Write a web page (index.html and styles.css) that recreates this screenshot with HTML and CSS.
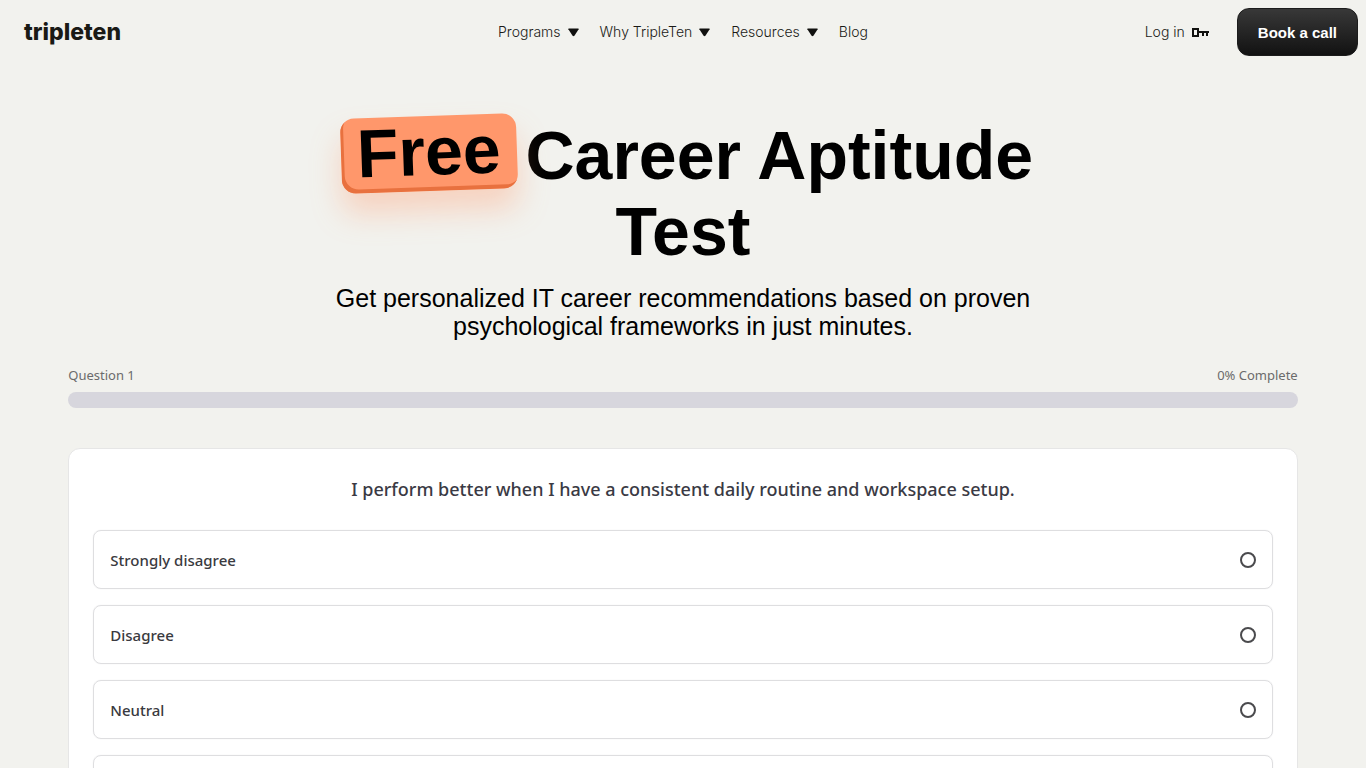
FILE: index.html
```html
<!DOCTYPE html>
<html lang="en">

<head>
    <title>Free Career Aptitude Test | TripleTen</title>
    <meta charset="UTF-8">
    <meta name="viewport" content="width=device-width, initial-scale=1.0">
    <link rel="stylesheet" href="styles.css">
</head>

<body>
    <header class="header">
        <a class="logo" href="#">tripleten</a>
        <nav class="nav">
            <button class="nav-item" type="button">Programs
                <svg class="arrow" viewBox="0 0 12 9"><path d="M1 0h10q1 0 .6 1L7 8q-1 1-2 0L.4 1Q0 0 1 0z"/></svg>
            </button>
            <button class="nav-item" type="button">Why TripleTen
                <svg class="arrow" viewBox="0 0 12 9"><path d="M1 0h10q1 0 .6 1L7 8q-1 1-2 0L.4 1Q0 0 1 0z"/></svg>
            </button>
            <button class="nav-item" type="button">Resources
                <svg class="arrow" viewBox="0 0 12 9"><path d="M1 0h10q1 0 .6 1L7 8q-1 1-2 0L.4 1Q0 0 1 0z"/></svg>
            </button>
            <a class="nav-item" href="#">Blog</a>
        </nav>
        <div class="actions">
            <a class="login" href="#">Log in
                <svg class="key" viewBox="0 0 17 9"><path fill-rule="evenodd" d="M0 0h7v3h10v2h-1v3h-2V5h-2v3h-2V5H7v4H0zM2 2v5h3V2z"/></svg>
            </a>
            <button class="btn-call" type="button">Book a call</button>
        </div>
    </header>

    <main>
        <section class="hero">
            <h1><span class="free">Free</span> Career Aptitude Test</h1>
            <p>Get personalized IT career recommendations based on proven psychological frameworks in just minutes.</p>
        </section>

        <section class="quiz">
            <div class="progress-info">
                <span id="question-number">Question 1</span>
                <span>0% Complete</span>
            </div>
            <progress class="progress" max="100" value="0" aria-labelledby="question-number"></progress>

            <form class="card">
                <h2 id="question">I perform better when I have a consistent daily routine and workspace setup.</h2>
                <div class="options" role="radiogroup" aria-labelledby="question">
                    <label class="option">Strongly disagree<input type="radio" name="answer" value="1"></label>
                    <label class="option">Disagree<input type="radio" name="answer" value="2"></label>
                    <label class="option">Neutral<input type="radio" name="answer" value="3"></label>
                    <label class="option">Agree<input type="radio" name="answer" value="4"></label>
                    <label class="option">Strongly agree<input type="radio" name="answer" value="5"></label>
                </div>
            </form>
        </section>
    </main>
</body>

</html>
```
FILE: styles.css
```css
* {
    box-sizing: border-box;
}
body {
    margin: 0;
    background-color: #f2f2ee;
    color: #000;
    font-family: "Liberation Sans", Arial, sans-serif;
}
a {
    color: inherit;
    text-decoration: none;
}
button {
    font-family: inherit;
    cursor: pointer;
}

/* header */
.header {
    display: grid;
    grid-template-columns: 1fr auto 1fr;
    align-items: center;
    padding: 8px;
}
.logo {
    margin-left: 16px;
    color: #1a1a16;
    font-family: Inter, sans-serif;
    font-size: 23px;
    font-weight: 800;
    line-height: 28px;
}
.nav {
    display: flex;
    gap: 21px;
}
.nav-item,
.login {
    display: flex;
    align-items: center;
    gap: 7px;
    padding: 0;
    border: none;
    background: none;
    color: #1a1a16;
    font-family: Inter, sans-serif;
    font-size: 14px;
    font-weight: 300;
    line-height: 20px;
}
.arrow {
    width: 11px;
    height: 9px;
    fill: #11110f;
}
.actions {
    display: flex;
    justify-content: flex-end;
    align-items: center;
    gap: 28px;
}
.key {
    width: 17px;
    height: 9px;
    fill: #11110f;
}
.btn-call {
    height: 48px;
    padding: 0 20px;
    border: 1px solid #1c1c1c;
    border-radius: 12px;
    background: linear-gradient(#383838, #121212);
    color: #fff;
    font-size: 15px;
    font-weight: 700;
}

/* hero */
.hero {
    max-width: 750px;
    margin: 0 auto;
    padding-top: 53px;
    text-align: center;
}
.hero h1 {
    margin: 0;
    font-size: 68px;
    font-weight: 700;
    line-height: 76px;
}
.free {
    display: inline-block;
    height: 75px;
    margin: -10px -10px 0 8px;
    padding: 0 16px;
    border-radius: 14px;
    background-color: #ff976b;
    box-shadow: inset 3px -4px 0 #e8713f, 0 20px 30px rgba(255, 151, 107, 0.35);
    line-height: 70px;
    vertical-align: 4px;
    transform: rotate(-2deg);
}
.hero p {
    margin: 15px 0 0;
    font-size: 25px;
    line-height: 28px;
}

/* quiz */
.quiz {
    width: 90%;
    margin: 24px auto 0;
    font-family: "Noto Sans", sans-serif;
}
.progress-info {
    display: flex;
    justify-content: space-between;
    color: #6b6b6b;
    font-size: 13px;
    line-height: 22px;
}
.progress {
    display: block;
    width: 100%;
    height: 16px;
    margin-top: 6px;
    border: none;
    border-radius: 8px;
    background-color: #d7d6dd;
    overflow: hidden;
    appearance: none;
}
.progress::-webkit-progress-bar {
    background-color: #d7d6dd;
}
.progress::-webkit-progress-value {
    background-color: #ff976b;
}
.card {
    margin: 40px 0;
    padding: 24px;
    border: 1px solid #e6e6e6;
    border-radius: 12px;
    background-color: #fff;
}
.card h2 {
    margin: 0 0 24px;
    color: #3a3a44;
    font-size: 18px;
    font-weight: 500;
    line-height: 33px;
    text-align: center;
}
.options {
    display: flex;
    flex-direction: column;
    gap: 16px;
}
.option {
    display: flex;
    justify-content: space-between;
    align-items: center;
    padding: 17px 16px 16px;
    border: 1px solid #dedee0;
    border-radius: 8px;
    box-shadow: 0 0 1px #dedee0;
    color: #3a3a40;
    font-size: 15px;
    font-weight: 500;
    line-height: 24px;
    cursor: pointer;
}
.option input {
    width: 16px;
    height: 16px;
    margin: 0;
    border: 2px solid #4a4a4d;
    border-radius: 50%;
    appearance: none;
}
.option input:checked {
    border-width: 5px;
    border-color: #e8713f;
}
```
